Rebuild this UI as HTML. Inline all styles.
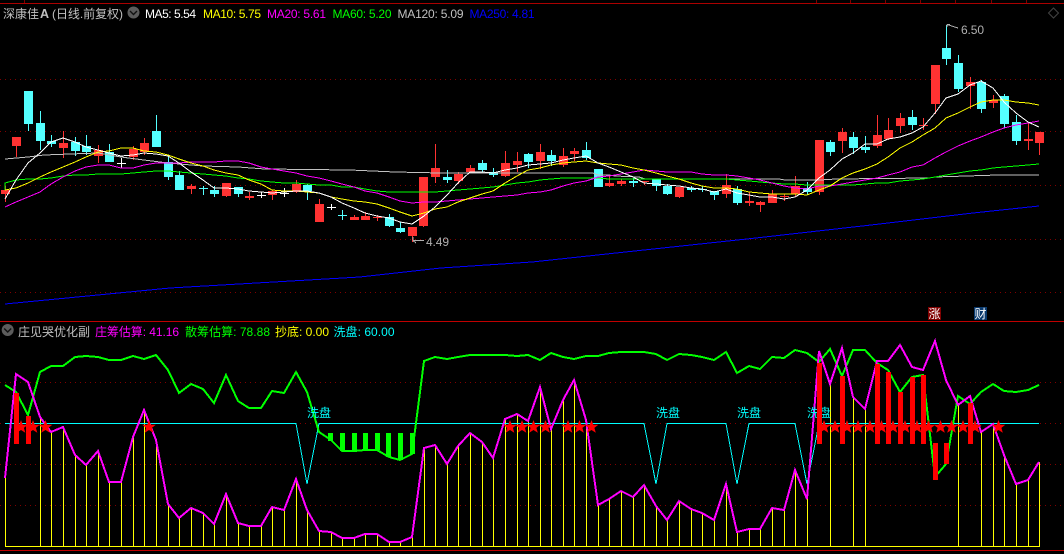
<!DOCTYPE html>
<html lang="zh"><head><meta charset="utf-8"><title>深康佳A</title>
<style>
html,body{margin:0;padding:0;background:#000;width:1064px;height:554px;overflow:hidden}
svg{display:block}
text{font-family:"Liberation Sans","WenQuanYi Zen Hei","Noto Sans CJK SC",sans-serif;font-size:12px}
.l{fill:none;shape-rendering:crispEdges}
</style></head><body>
<svg width="1064" height="554" viewBox="0 0 1064 554" xmlns="http://www.w3.org/2000/svg">
<rect width="1064" height="554" fill="#000"/>
<!-- frame -->
<g class="l" stroke="#aa0000">
<path d="M0 3.5H1064" stroke-width="1"/>
<path d="M24.5 0V3M816.5 0V3M850.5 0V3M885.5 0V3M920.5 0V3M955.5 0V3M991.5 0V3M1026.5 0V3" stroke="#800000"/>
</g>
<path d="M0 321.5H1064" stroke="#c00000" class="l"/>
<path d="M0 550.5H1064" stroke="#c00000" class="l" stroke-width="1"/>
<!-- grid -->
<g class="l" stroke="#800000" stroke-dasharray="1 4">
<path d="M0 79.5H1064M0 131.5H1064M0 185.5H1064M0 239.5H1064M0 292.5H1064"/>
<path d="M0 382.5H1064M0 423.5H1064M0 464.5H1064M0 505.5H1064"/>
</g>
<!-- diamond -->
<path d="M1053.5 8L1058.5 13L1053.5 18L1048.5 13Z" fill="none" stroke="#444"/>
<!-- candles -->
<g shape-rendering="crispEdges">
<path fill="none" stroke="#ff3232" d="M5.5 186V202M16.5 137V157M63.5 131V158M98.5 145V163M133.5 146V160M144.5 138V155M191.5 184V194M226.5 183V197M249.5 192V200M272.5 190V200M296.5 180V193M319.5 199V222M354.5 215V220M365.5 212V220M377.5 215V221M412.5 227V242M423.5 177V227M435.5 144V183M458.5 172V184M470.5 165V172M505.5 151V177M517.5 152V172M540.5 144V169M563.5 148V167M574.5 148V161M609.5 176V187M621.5 179V186M644.5 181V185M679.5 187V198M726.5 174V198M749.5 192V206M760.5 201V212M772.5 190V203M784.5 194V201M795.5 176V197M819.5 140V195M842.5 128V153M877.5 115V148M888.5 118V140M900.5 113V133M923.5 118V130M935.5 65V114M970.5 77V109M993.5 95V108M1028.5 122V150M1039.5 132V155M373 217.5h9M640 181.5h9M780 196.5h9M919 125.5h9"/>
<path fill="#ff3232" d="M1 190h9v4h-9zM12 137h9v9h-9zM59 143h9v5h-9zM94 150h9v6h-9zM129 149h9v8h-9zM140 143h9v9h-9zM187 186h9v3h-9zM222 183h9v13h-9zM245 196h9v2h-9zM268 191h9v4h-9zM292 184h9v8h-9zM315 204h9v18h-9zM350 217h9v3h-9zM361 216h9v4h-9zM408 227h9v9h-9zM419 177h9v49h-9zM431 168h9v9h-9zM454 174h9v7h-9zM466 168h9v4h-9zM501 163h9v13h-9zM513 161h9v4h-9zM536 152h9v9h-9zM559 156h9v9h-9zM570 151h9v3h-9zM605 183h9v3h-9zM617 181h9v3h-9zM675 187h9v10h-9zM722 185h9v9h-9zM745 201h9v2h-9zM756 202h9v3h-9zM768 194h9v9h-9zM791 186h9v8h-9zM815 140h9v52h-9zM838 132h9v9h-9zM873 135h9v11h-9zM884 130h9v9h-9zM896 118h9v8h-9zM931 65h9v39h-9zM966 82h9v4h-9zM989 100h9v3h-9zM1024 139h9v2h-9zM1035 132h9v11h-9z"/>
<path fill="none" stroke="#54ffff" d="M28.5 91V131M40.5 111V150M51.5 135V147M75.5 137V156M86.5 135V155M109.5 144V162M156.5 115V147M168.5 156V180M179.5 171V190M214.5 186V197M238.5 187V197M307.5 184V200M389.5 214V227M400.5 222V233M447.5 170V183M482.5 160V173M493.5 168V177M528.5 153V168M551.5 150V166M586.5 142V160M633.5 178V187M656.5 179V191M667.5 184V195M691.5 186V192M702.5 186V192M714.5 191V200M737.5 186V205M807.5 182V195M830.5 140V156M853.5 132V154M865.5 136V153M912.5 110V130M946.5 25V65M958.5 55V92M981.5 80V113M1004.5 94V128M1016.5 115V145M203.5 186V195M199 188.5h9M342.5 210V220M338 215.5h9"/>
<path fill="#54ffff" d="M24 91h9v33h-9zM36 123h9v18h-9zM47 141h9v3h-9zM71 142h9v9h-9zM82 146h9v6h-9zM105 152h9v10h-9zM152 131h9v16h-9zM164 162h9v15h-9zM175 175h9v15h-9zM210 190h9v4h-9zM234 187h9v7h-9zM303 185h9v6h-9zM385 217h9v9h-9zM396 228h9v4h-9zM443 177h9v3h-9zM478 163h9v7h-9zM489 172h9v3h-9zM524 154h9v8h-9zM547 155h9v6h-9zM582 150h9v8h-9zM594 169h9v18h-9zM629 181h9v2h-9zM652 179h9v7h-9zM663 186h9v8h-9zM687 188h9v2h-9zM698 189h9v1h-9zM710 191h9v4h-9zM733 189h9v14h-9zM803 188h9v4h-9zM826 142h9v10h-9zM849 137h9v11h-9zM861 147h9v3h-9zM908 117h9v8h-9zM942 48h9v11h-9zM954 63h9v26h-9zM977 82h9v27h-9zM1000 96h9v28h-9zM1012 122h9v19h-9z"/>
<path fill="none" stroke="#fff" d="M121.5 158V168M117 163.5h9M261.5 192V198M257 195.5h9M284.5 188V197M280 193.5h9M331.5 204V210M327 207.5h9"/>
</g>
<!-- MA lines -->
<g class="l" stroke-width="1">
<polyline stroke="#0000ff" points="5,304 170,288 360,277 441,268 532,262 756,238 871,225 973,213 1039,206"/>
<polyline stroke="#c0c0c0" points="5,159 28,157 44,155 70,154 98,153 121,157 144,160 168,163 203,166 238,167 265,169 350,170 395,172 441,173 593,173 598,175 609,175 615,176 639,177 645,179 779,179 785,180 820,180 836,179 929,178 935,177 998,175 1039,175"/>
<polyline stroke="#00ff00" points="5,190 5,183 16,180 28,179 40,179 51,178 63,176 75,175 86,175 98,174 109,174 121,174 133,173 144,172 156,171 168,171 179,172 191,173 203,174 214,175 226,176 238,178 249,179 261,181 272,182 284,183 296,183 307,184 319,185 331,185 342,187 354,187 365,189 377,191 389,192 400,192 412,192 424,192 435,192 447,191 458,190 470,189 482,188 493,187 505,185 517,183 528,182 540,180 551,179 563,178 574,178 586,178 598,178 609,179 621,179 633,179 644,179 656,179 667,179 679,179 691,179 702,179 714,179 726,179 737,180 749,181 760,182 772,183 784,184 795,184 807,185 819,185 830,185 842,185 853,185 865,184 877,183 888,183 900,181 912,180 923,179 935,177 946,175 958,173 970,171 981,170 993,168 1004,167 1016,166 1028,165 1039,164"/>
<polyline stroke="#ff00ff" points="5,207 16,202 28,197 40,192 51,184 63,177 75,171 86,167 98,165 109,165 121,168 133,168 144,165 156,163 168,163 179,163 191,162 203,162 214,162 226,161 238,161 249,163 261,167 272,169 284,171 296,173 307,176 319,178 331,181 342,184 354,187 365,191 377,193 389,197 400,201 412,203 424,202 435,202 447,201 458,200 470,199 482,198 493,197 505,196 517,195 528,193 540,192 551,190 563,186 574,183 586,181 598,177 609,176 621,174 633,172 644,170 656,171 667,172 679,172 691,172 702,174 714,175 726,175 737,176 749,178 760,180 772,183 784,186 795,188 807,189 819,186 830,186 842,184 853,182 865,180 877,178 888,175 900,172 912,167 923,165 935,158 946,152 958,146 970,141 981,137 993,132 1004,128 1016,125 1028,123 1039,121"/>
<polyline stroke="#ffff00" points="5,190 16,188 28,183 40,177 51,172 63,167 75,162 86,157 98,152 109,151 121,148 133,148 144,151 156,152 168,155 179,159 191,163 203,166 214,170 226,173 238,175 249,180 261,184 272,190 284,191 296,191 307,192 319,193 331,197 342,199 354,201 365,202 377,204 389,208 400,212 412,216 424,213 435,209 447,207 458,202 470,198 482,194 493,191 505,183 517,176 528,170 540,168 551,165 563,163 574,162 586,161 598,163 609,164 621,165 633,168 644,170 656,173 667,176 679,179 691,183 702,186 714,188 726,188 737,189 749,192 760,193 772,194 784,194 795,194 807,195 819,190 830,186 842,178 853,173 865,169 877,164 888,157 900,148 912,142 923,135 935,128 946,118 958,113 970,107 981,102 993,100 1004,100 1016,102 1028,103 1039,105"/>
<polyline stroke="#ffffff" points="5,199 16,180 28,163 40,153 51,142 63,138 75,142 86,147 98,150 109,153 121,156 133,155 144,153 156,154 168,156 179,163 191,172 203,180 214,188 226,188 238,189 249,191 261,192 272,193 284,192 296,191 307,191 319,193 331,197 342,203 354,208 365,213 377,216 389,218 400,222 412,224 424,216 435,207 447,195 458,183 470,172 482,172 493,173 505,170 517,168 528,165 540,164 551,163 563,160 574,158 586,156 598,163 609,167 621,172 633,177 644,183 656,184 667,185 679,186 691,188 702,189 714,192 726,189 737,193 749,195 760,197 772,197 784,199 795,197 807,190 819,178 830,170 842,159 853,153 865,144 877,144 888,139 900,137 912,133 923,127 935,113 946,98 958,94 970,85 981,81 993,88 1004,102 1016,113 1028,122 1039,127"/>
</g>
<!-- hi/lo labels -->
<path d="M413 240.5H424M413 240.5V237M413 240.5L416 243" fill="none" stroke="#b0b0b0" class="l"/>
<text x="426" y="246" fill="#b0b0b0" textLength="23">4.49</text>
<path d="M947 24.5L958 28M947 24.5H950M947 24.5V27" fill="none" stroke="#b0b0b0" class="l"/>
<text x="961" y="34" fill="#b0b0b0" textLength="23">6.50</text>
<!-- tags -->
<rect x="928" y="307" width="13" height="13" fill="#800000"/>
<text x="928.5" y="318" fill="#fff">涨</text>
<rect x="974" y="307" width="13" height="13" fill="#0a3a6e"/>
<text x="974.5" y="318" fill="#fff">财</text>
<!-- title -->
<text x="3" y="18" fill="#c0c0c0" textLength="36">深康佳</text>
<text x="40" y="18" fill="#c0c0c0" textLength="9" style="font-size:12.5px;font-weight:700">A</text>
<text x="52" y="18" fill="#c0c0c0" textLength="71">(日线.前复权)</text>
<circle cx="133.5" cy="12.5" r="6" fill="#5c5c5c"/>
<path d="M130 11L133.5 14.5L137 11" fill="none" stroke="#111" stroke-width="1.4"/>
<text x="145" y="18" fill="#fff" textLength="51">MA5: 5.54</text>
<text x="203" y="18" fill="#ffff00" textLength="58">MA10: 5.75</text>
<text x="267" y="18" fill="#ff00ff" textLength="59">MA20: 5.61</text>
<text x="332.5" y="18" fill="#00ff00" textLength="59">MA60: 5.20</text>
<text x="397.5" y="18" fill="#c0c0c0" textLength="66">MA120: 5.09</text>
<text x="469.5" y="18" fill="#0000ff" textLength="65">MA250: 4.81</text>
<!-- sub legend -->
<circle cx="7.7" cy="330" r="6" fill="#5c5c5c"/>
<path d="M4.2 328.5L7.7 332L11.2 328.5" fill="none" stroke="#111" stroke-width="1.4"/>
<text x="18" y="336" fill="#c0c0c0" textLength="72">庄见哭优化副</text>
<text x="95" y="336" fill="#ff00ff" textLength="84">庄筹估算: 41.16</text>
<text x="185" y="336" fill="#00ff00" textLength="85">散筹估算: 78.88</text>
<text x="275" y="336" fill="#ffff00" textLength="54">抄底: 0.00</text>
<text x="333.5" y="336" fill="#00ffff" textLength="61">洗盘: 60.00</text>
<!-- sub chart: sticks -->
<g class="l">
<path stroke="#ffff00" d="M5.5 478V546M40.5 417V546M51.5 432V546M63.5 427V546M75.5 455V546M86.5 465V546M98.5 451V546M109.5 482V546M121.5 482V546M133.5 437V546M144.5 410V546M156.5 440V546M168.5 504V546M179.5 518V546M191.5 508V546M203.5 513V546M214.5 524V546M226.5 494V546M238.5 523V546M249.5 526V546M261.5 526V546M272.5 507V546M284.5 510V546M296.5 479V546M307.5 510V546M319.5 531V546M331.5 532V546M342.5 538V546M354.5 538V546M365.5 534V546M377.5 534V546M389.5 542V546M400.5 542V546M412.5 537V546M424.5 448V546M435.5 445V546M447.5 464V546M458.5 446V546M470.5 433V546M482.5 442V546M493.5 458V546M505.5 419V546M517.5 414V546M528.5 421V546M540.5 387V546M551.5 429V546M563.5 400V546M574.5 380V546M586.5 420V546M598.5 505V546M609.5 499V546M621.5 491V546M633.5 497V546M644.5 485V546M656.5 506V546M667.5 520V546M679.5 501V546M691.5 509V546M702.5 513V546M714.5 520V546M726.5 484V546M737.5 532V546M749.5 529V546M760.5 529V546M772.5 508V546M784.5 510V546M795.5 470V546M807.5 499V546M830.5 384V546M853.5 397V546M865.5 409V546M958.5 405V546M981.5 432V546M993.5 424V546M1004.5 455V546M1016.5 484V546M1028.5 480V546M1039.5 462V546"/>
<path stroke="#ffff00" d="M5 546.5H1040"/>
<!-- cyan line -->
<polyline stroke="#00ffff" points="5,423.5 296,423.5 307,484 319,423.5 644,423.5 656,484 667,423.5 726,423.5 737,484 749,423.5 795,423.5 807,484 819,423.5 1039,423.5"/>
<!-- green bars -->
<path fill="#00ff00" stroke="none" d="M328 433h5v8h-5zM340 433h5v18h-5zM352 433h5v18h-5zM363 433h5v17h-5zM375 433h5v17h-5zM386 433h5v24h-5zM398 433h5v27h-5zM410 433h5v21h-5z"/>
<!-- green line -->
<polyline stroke="#00ff00" stroke-width="2" points="5,385 16,392 28,415 40,372 51,366 63,366 75,357 86,356 98,357 109,360 121,360 133,356 144,359 156,355 168,370 179,393 191,384 203,389 214,403 226,375 238,401 249,408 261,408 272,391 284,393 296,372 307,392 319,432 331,440 342,451 354,451 365,450 377,450 389,457 400,460 412,454 424,361 435,357 447,359 458,357 470,355 482,355 493,355 505,355 517,356 528,355 540,360 551,353 563,357 574,359 586,356 598,356 609,353 621,352 633,352 644,352 656,354 667,360 679,354 691,355 702,357 714,360 726,352 737,373 749,366 760,369 772,357 784,358 795,350 807,353 819,362 830,349 842,376 853,350 865,350 877,363 888,370 900,392 912,377 923,375 935,477 946,464 958,396 970,404 981,392 993,384 1004,391 1016,392 1028,390 1039,385"/>
<!-- magenta line -->
<polyline stroke="#ff00ff" stroke-width="2" points="5,478 16,374 28,382 40,417 51,432 63,427 75,455 86,465 98,451 109,482 121,482 133,437 144,410 156,440 168,504 179,518 191,508 203,513 214,524 226,494 238,523 249,526 261,526 272,507 284,510 296,479 307,510 319,531 331,532 342,538 354,538 365,534 377,534 389,542 400,542 412,537 424,448 435,445 447,464 458,446 470,433 482,442 493,458 505,419 517,414 528,421 540,387 551,429 563,400 574,380 586,420 598,505 609,499 621,491 633,497 644,485 656,506 667,520 679,501 691,509 702,513 714,520 726,484 737,532 749,529 760,529 772,508 784,510 795,470 807,499 819,351 830,384 842,348 853,397 865,409 877,361 888,361 900,345 912,367 923,370 935,341 946,380 958,405 970,396 981,432 993,424 1004,455 1016,484 1028,480 1039,462"/>
</g>
<!-- labels 洗盘 -->
<text x="307" y="417" fill="#00ffff" textLength="24">洗盘</text>
<text x="656" y="417" fill="#00ffff" textLength="24">洗盘</text>
<text x="737" y="417" fill="#00ffff" textLength="24">洗盘</text>
<text x="807" y="417" fill="#00ffff" textLength="24">洗盘</text>
<!-- stars -->
<defs><polygon id="s" fill="#ff0000" points="0,-7 1.8,-2.3 6.8,-2.3 2.9,0.9 4.3,5.8 0,3 -4.3,5.8 -2.9,0.9 -6.8,-2.3 -1.8,-2.3"/></defs>
<g>
<use href="#s" x="21" y="427"/><use href="#s" x="33" y="427"/><use href="#s" x="45.5" y="427"/><use href="#s" x="149" y="427"/>
<use href="#s" x="510" y="427"/><use href="#s" x="522" y="427"/><use href="#s" x="533.5" y="427"/><use href="#s" x="545.5" y="427"/>
<use href="#s" x="568" y="427"/><use href="#s" x="579.5" y="427"/><use href="#s" x="591.5" y="427"/>
<use href="#s" x="824" y="427"/><use href="#s" x="835" y="427"/><use href="#s" x="847" y="427"/><use href="#s" x="858" y="427"/><use href="#s" x="870" y="427"/><use href="#s" x="881.5" y="427"/><use href="#s" x="893" y="427"/><use href="#s" x="905" y="427"/><use href="#s" x="917" y="427"/><use href="#s" x="928.5" y="427"/><use href="#s" x="940.5" y="427"/><use href="#s" x="951.5" y="427"/><use href="#s" x="963" y="427"/><use href="#s" x="975" y="427"/><use href="#s" x="998.5" y="427"/>
</g>
<!-- red bars -->
<path fill="#ff0000" shape-rendering="crispEdges" d="M14 393h5v51h-5zM26 416h5v28h-5zM817 363h5v81h-5zM840 376h5v68h-5zM875 364h5v80h-5zM886 372h5v72h-5zM898 392h5v52h-5zM910 377h5v67h-5zM921 375h5v69h-5zM933 443h5v37h-5zM944 443h5v21h-5zM968 403h5v41h-5z"/>
</svg>
</body></html>
